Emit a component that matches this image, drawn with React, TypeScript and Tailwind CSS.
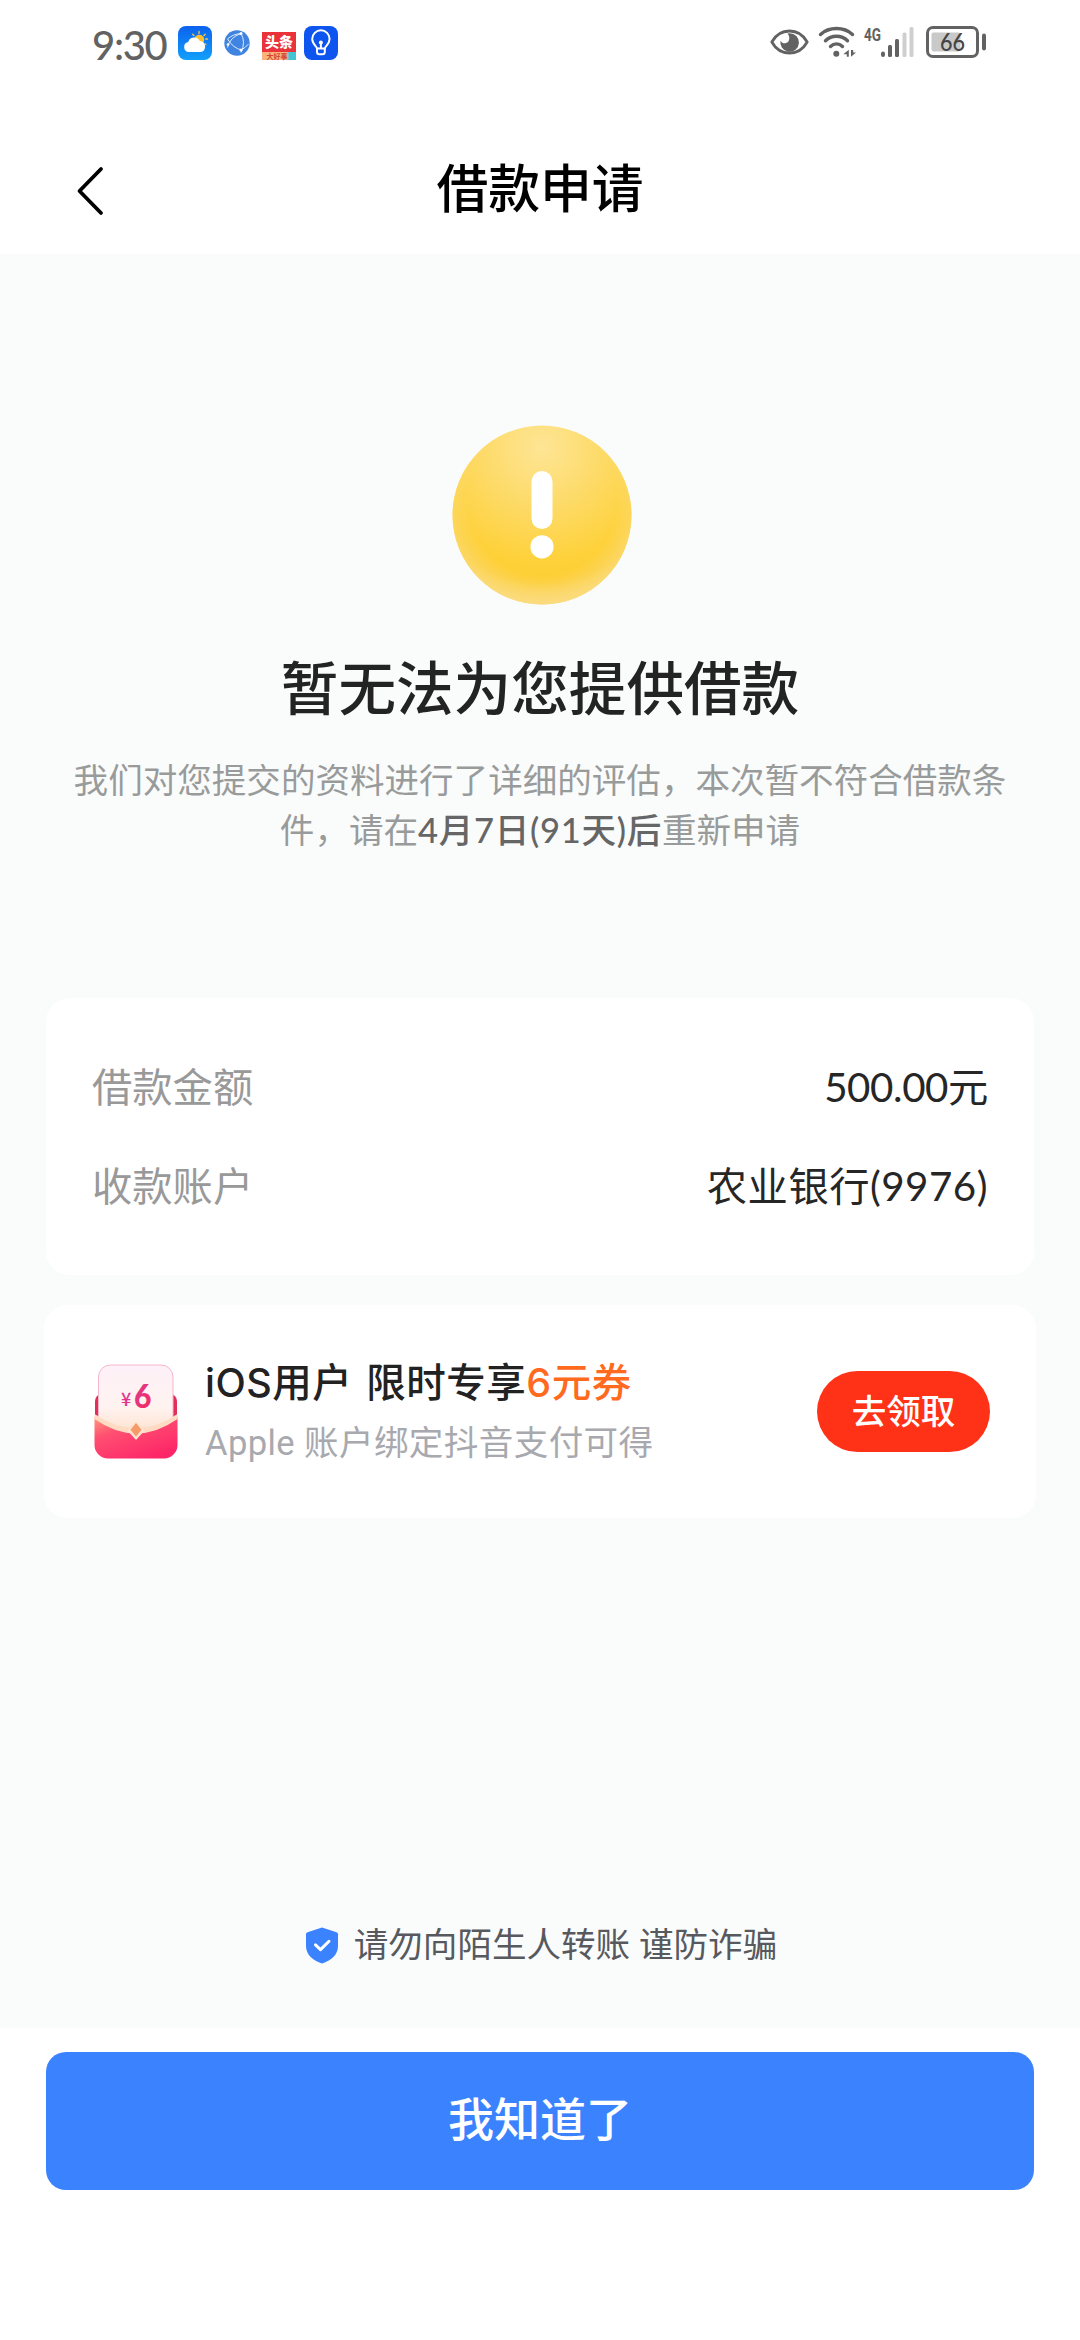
const details = [
  { label: "借款金额", value: "500.00元", tracking: "tracking-[-0.4px]" },
  { label: "收款账户", value: "农业银行(9976)", tracking: "tracking-[0.5px]" },
];

function WeatherIcon() {
  return (
    <svg className="h-[34px] w-[34px]" viewBox="0 0 34 34">
      <defs>
        <linearGradient id="sky" x1="0" y1="0" x2="0" y2="1">
          <stop offset="0" stopColor="#0b62ee" />
          <stop offset="1" stopColor="#12a0fb" />
        </linearGradient>
      </defs>
      <rect width="34" height="34" rx="8" fill="url(#sky)" />
      <g stroke="#f7c948" strokeWidth="1.3" strokeLinecap="round">
        <path d="M21 5.500v2M14.600 8.200l1.300 1.300M27.200 8.200l-1.300 1.300M28 18.600l-1-1M29.400 13h-1.600" />
      </g>
      <circle cx="21.300" cy="13.600" r="4.900" fill="#fbc02f" />
      <path
        d="M11 26a5 5 0 0 1-.8-9.900 6.300 6.300 0 0 1 11.600-1.200A5.600 5.600 0 0 1 22.500 26z"
        fill="#fff"
      />
    </svg>
  );
}

function GlobeIcon() {
  return (
    <svg className="ml-3 h-[26px] w-[26px]" viewBox="0 0 26 26">
      <circle cx="13" cy="13" r="12.700" fill="#3f84e0" />
      <g fill="none" stroke="#dcebff" strokeWidth="1">
        <path d="M17 3.500Q6 7 3.500 17.500M17 3.500Q22 12 17 22.500M3.500 9Q9 18 17.500 20M17.500 20Q22 17 24.500 14M3.500 9Q9 4 17 3.500" />
      </g>
      <g fill="#fff">
        <circle cx="17" cy="3.500" r="1.500" />
        <circle cx="4" cy="14.500" r="1.300" />
        <circle cx="17" cy="20" r="1.500" />
      </g>
    </svg>
  );
}

function ToutiaoIcon() {
  return (
    <div className="mt-[6px] ml-3 flex h-7 w-[34px] flex-col bg-[#e9323a]">
      <div className="flex h-5 items-center justify-center text-[14px] leading-[20px] font-black text-white">
        头条
      </div>
      <div className="flex h-2 items-center justify-center bg-linear-to-r from-[#f9b47e] from-70% to-[#43c3d6] to-80% pr-1 text-[7px] leading-[8px] font-bold text-[#d4442f]">
        大好事
      </div>
    </div>
  );
}

function BulbIcon() {
  return (
    <svg className="ml-2 h-[34px] w-[34px]" viewBox="0 0 34 34">
      <rect width="34" height="34" rx="8" fill="#0d55ee" />
      <g
        fill="none"
        stroke="#fff"
        strokeWidth="2"
        strokeLinecap="round"
        strokeLinejoin="round"
      >
        <path d="M13 22.500c0-2-4.800-4.500-4.800-9.500a8.700 8.700 0 0 1 17.400 0c0 5-4.800 7.500-4.800 9.500z" />
        <path d="M13 22.500v3.200c0 1.500.8 2.600 2.200 2.600h3.400c1.400 0 2.200-1.100 2.200-2.600v-3.200" />
        <path d="M16.900 17.500v4.500" />
      </g>
      <circle cx="16.900" cy="16.600" r="2" fill="#fff" />
    </svg>
  );
}

function EyeIcon() {
  return (
    <svg className="h-[26px] w-[39px]" viewBox="0 0 39 26">
      <path
        d="M1.800 13C6 5.500 12.500 2 19.500 2S33 5.500 37.200 13C33 20.500 26.500 24 19.500 24S6 20.500 1.800 13z"
        fill="none"
        stroke="#626262"
        strokeWidth="2.800"
        strokeLinejoin="round"
      />
      <path
        d="M19.500 4.200a9.300 9.300 0 1 1-8.900 7.200c1 2.300 3.300 3.400 5.400 2.700 3.600-1.200 4.600-6.500 1.400-9.700z"
        fill="#626262"
      />
    </svg>
  );
}

function WifiIcon() {
  return (
    <svg className="ml-[9px] h-[32px] w-[38px]" viewBox="0 0 38 32">
      <g fill="none" stroke="#626262" strokeWidth="3.400" strokeLinecap="round">
        <path d="M2.500 8.500C11 .5 26 .5 34.500 8.500" />
        <path d="M7.500 14.700C13.500 8.700 23.500 8.700 29.500 14.700" />
        <path d="M12.500 20.500C16 17 21 17 24.500 20.500" />
      </g>
      <circle cx="18.300" cy="27.800" r="3" fill="#626262" />
      <path d="M30.800 23.800v7h-2v-2.600h-3.500zM33 24v6.800l5-4.300h-2.800V24z" fill="#626262" />
    </svg>
  );
}

function SignalIcon() {
  return (
    <svg className="h-[32px] w-[50px] overflow-visible" viewBox="0 0 50 32">
      <text
        x="0"
        y="15"
        fill="#626262"
        fontFamily="Roboto, sans-serif"
        fontSize="18"
        fontWeight="700"
        textLength="17"
        lengthAdjust="spacingAndGlyphs"
      >
        4G
      </text>
      <g fill="#626262">
        <rect x="17" y="25.500" width="4" height="5.500" rx="2" />
        <rect x="24" y="19" width="4" height="12" rx="1.500" />
        <rect x="31" y="13" width="4" height="18" rx="1.500" />
      </g>
      <g fill="#cfcfcf">
        <rect x="38.500" y="6.500" width="4" height="24.500" rx="1.500" />
        <rect x="45.500" y="1" width="4" height="30" rx="1.500" />
      </g>
    </svg>
  );
}

function BatteryIcon() {
  return (
    <svg className="ml-3 h-[32px] w-[61px]" viewBox="0 0 61 32">
      <rect x="5.500" y="6.500" width="29" height="19" rx="2" fill="#c9c9c9" />
      <rect
        x="1.500"
        y="1.500"
        width="50"
        height="29"
        rx="5.500"
        fill="none"
        stroke="#626262"
        strokeWidth="3"
      />
      <rect x="56" y="7.500" width="4" height="17" rx="2" fill="#626262" />
      <text
        x="26.500"
        y="25"
        textAnchor="middle"
        fill="#444"
        fontFamily="Lato, sans-serif"
        fontSize="24"
        fontWeight="500"
        textLength="25"
        lengthAdjust="spacingAndGlyphs"
      >
        66
      </text>
    </svg>
  );
}

function WarningIcon() {
  return (
    <svg className="ml-[3px] h-[180px] w-[180px]" viewBox="0 0 180 180">
      <defs>
        <radialGradient id="coin" cx="0.5" cy="0.12" r="0.92">
          <stop offset="0" stopColor="#fee595" />
          <stop offset="0.35" stopColor="#fddb6a" />
          <stop offset="0.7" stopColor="#fed13a" />
          <stop offset="0.82" stopColor="#fdce34" />
          <stop offset="1" stopColor="#f9db82" />
        </radialGradient>
        <radialGradient id="rim" cx="0.5" cy="0.42" r="0.58">
          <stop offset="0.72" stopColor="#fbdc80" stopOpacity="0" />
          <stop offset="1" stopColor="#fbdc80" stopOpacity="0.85" />
        </radialGradient>
      </defs>
      <circle cx="90" cy="90" r="89.500" fill="url(#coin)" />
      <circle cx="90" cy="90" r="89.500" fill="url(#rim)" />
      <rect x="79.500" y="46" width="21" height="58" rx="10.500" fill="#fff" />
      <circle cx="90" cy="121.800" r="11.600" fill="#fff" />
    </svg>
  );
}

function EnvelopeIcon() {
  return (
    <svg className="h-[96px] w-[84px] shrink-0" viewBox="0 0 84 96">
      <defs>
        <linearGradient id="pocket" x1="0" y1="0" x2="0.7" y2="1">
          <stop offset="0" stopColor="#ff9a7c" />
          <stop offset="0.35" stopColor="#ff4f72" />
          <stop offset="1" stopColor="#fd2668" />
        </linearGradient>
        <linearGradient id="ticket" x1="0" y1="0" x2="0" y2="1">
          <stop offset="0" stopColor="#fdf0f7" />
          <stop offset="0.6" stopColor="#fff3f1" />
          <stop offset="1" stopColor="#fee0cc" />
        </linearGradient>
        <linearGradient id="yuan" x1="0" y1="0" x2="1" y2="1">
          <stop offset="0" stopColor="#d53c9c" />
          <stop offset="1" stopColor="#fa2a55" />
        </linearGradient>
      </defs>
      <rect x="1" y="30" width="82" height="45" rx="7" fill="#e32e58" />
      <rect
        x="4.500"
        y="1"
        width="74.500"
        height="70"
        rx="12"
        fill="url(#ticket)"
        stroke="#f5b5cd"
        strokeWidth="1"
      />
      <path
        d="M.5 53Q42 80 83.500 53V81a13.500 13.500 0 0 1-13.500 13.500H14A13.500 13.500 0 0 1 .5 81z"
        fill="url(#pocket)"
      />
      <path d="M.5 50Q42 78 83.500 50V55Q42 84 .5 55z" fill="#fedcc4" />
      <path d="M42 57l8.500 9.500L42 76l-8.500-9.500z" fill="#fee3cf" />
      <path d="M42 59l5.500 6.800L42 72.500l-5.500-6.700z" fill="#f59a68" />
      <text
        x="27"
        y="42"
        fill="#e2368c"
        fontFamily="Noto Sans CJK SC, sans-serif"
        fontSize="18"
        fontWeight="500"
      >
        ¥
      </text>
      <text
        x="40"
        y="44"
        fill="url(#yuan)"
        fontFamily="Lato, sans-serif"
        fontSize="32"
        fontWeight="900"
        textLength="17.500"
        lengthAdjust="spacingAndGlyphs"
      >
        6
      </text>
    </svg>
  );
}

function StatusBar() {
  return (
    <div className="flex h-[86px] items-start justify-between pt-[26px] pr-[93px] pl-[92px]">
      <div className="flex">
        <div className="w-[86px] text-[40px] leading-[38px] font-medium tracking-[-1.3px] text-[#626262]">
          9:30
        </div>
        <WeatherIcon />
        <div className="flex h-[34px] items-center">
          <GlobeIcon />
        </div>
        <ToutiaoIcon />
        <BulbIcon />
      </div>
      <div className="flex">
        <div className="pt-[3px]">
          <EyeIcon />
        </div>
        <WifiIcon />
        <div className="ml-2">
          <SignalIcon />
        </div>
        <BatteryIcon />
      </div>
    </div>
  );
}

function Header() {
  return (
    <header className="grid h-[168px] grid-cols-[1fr_auto_1fr] items-center px-[75px] pt-[37px]">
      <button aria-label="返回" className="pt-1">
        <svg className="h-[50px] w-[30px]" viewBox="0 0 30 50">
          <path
            d="M26 3L4.500 25L26 47"
            fill="none"
            stroke="#000"
            strokeWidth="3.800"
            strokeLinecap="round"
            strokeLinejoin="round"
          />
        </svg>
      </button>
      <h1 className="text-[51.800px] leading-none font-medium text-black">
        借款申请
      </h1>
    </header>
  );
}

export default function App() {
  return (
    <div className="flex h-[2340px] w-[1080px] flex-col bg-white font-[Lato,'Noto_Sans_CJK_SC',sans-serif]">
      <StatusBar />
      <Header />

      <main className="flex h-[1774px] flex-col bg-[#fafcfc] pt-[171px]">
        <section className="flex flex-col items-center">
          <WarningIcon />
          <h2 className="mt-[43px] text-[57.600px] leading-[80px] font-medium text-[#232323]">
            暂无法为您提供借款
          </h2>
          <p className="mt-[27px] w-[940px] text-center text-[34.560px] leading-[50px] text-[#999b9b]">
            我们对您提交的资料进行了详细的评估，本次暂不符合借款条
            <br />
            件，请在
            <span className="font-medium tracking-[0.7px] text-[#666]">
              4月7日(91天)后
            </span>
            重新申请
          </p>
        </section>

        <section className="mx-[46px] mt-[143px] flex h-[277px] flex-col justify-center gap-[39px] rounded-3xl bg-white px-[46px]">
          {details.map((item) => (
            <div
              key={item.label}
              className="flex h-[60px] items-center justify-between text-[40.300px] leading-[60px]"
            >
              <span className="text-[#999]">{item.label}</span>
              <span className={`${item.tracking} text-[#262626]`}>
                {item.value}
              </span>
            </div>
          ))}
        </section>

        <section className="mx-[44px] mt-[30px] flex h-[213px] items-center rounded-3xl bg-white pr-[46px] pl-[50px]">
          <EnvelopeIcon />
          <div className="ml-[27px] flex-1 pt-[3px] whitespace-nowrap">
            <div className="font-[Inter,'Noto_Sans_CJK_SC',sans-serif] text-[39.500px] leading-[60px] font-medium tracking-[0.5px] text-[#222] [word-spacing:3px]">
              iOS用户 限时专享<span className="text-[#ff6a1f]">6元券</span>
            </div>
            <div className="font-[Roboto,'Noto_Sans_CJK_SC',sans-serif] text-[34.560px] leading-[60px] tracking-[0.4px] text-[#a8a9ae]">
              Apple 账户绑定抖音支付可得
            </div>
          </div>
          <button className="flex h-[81px] w-[173px] items-center justify-center rounded-full bg-[#ff3218] pb-[2px] text-[34.560px] font-medium text-white">
            去领取
          </button>
        </section>

        <div className="mt-auto mb-[58px] flex h-[50px] items-center justify-center pl-[2px]">
          <svg className="h-[37px] w-[34px]" viewBox="0 0 34 37">
            <path
              d="M17 .5L31.500 5.200Q33 5.700 33 7.200V19C33 28 26 33.500 17 36.500C8 33.500 1 28 1 19V7.200Q1 5.700 2.500 5.200z"
              fill="#3b82ff"
            />
            <path
              d="M10.500 17.800l5 4.800 8.500-8.300"
              fill="none"
              stroke="#fff"
              strokeWidth="3"
              strokeLinecap="round"
              strokeLinejoin="round"
            />
          </svg>
          <span className="ml-[15px] pb-[2px] text-[34.560px] leading-[50px] text-[#57595f]">
            请勿向陌生人转账 谨防诈骗
          </span>
        </div>
      </main>

      <footer className="px-[46px] pt-6">
        <button className="flex h-[138px] w-full items-center justify-center rounded-[20px] bg-[#3b82ff] pb-[5px] text-[46px] font-medium text-white">
          我知道了
        </button>
      </footer>
    </div>
  );
}
